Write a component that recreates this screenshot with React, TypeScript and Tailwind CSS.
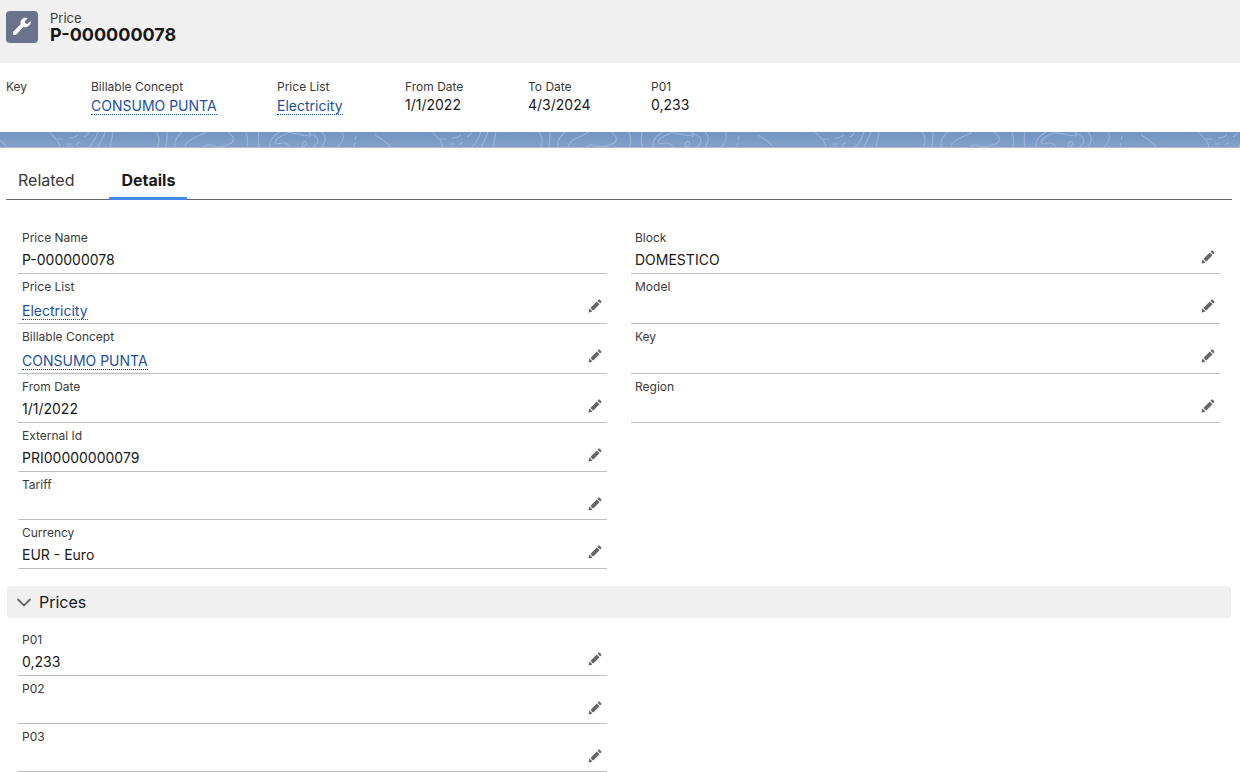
import { useState } from "react";

type Kind = "text" | "link" | "empty";
type Item = { label: string; value?: string; kind: Kind; editable?: boolean };

const rowHeights: Record<Kind, string> = {
  text: "h-[49px]",
  link: "h-[50px]",
  empty: "h-12",
};

const details: [Item, Item | null][] = [
  [{ label: "Price Name", value: "P-000000078", kind: "text" }, { label: "Block", value: "DOMESTICO", kind: "text", editable: true }],
  [{ label: "Price List", value: "Electricity", kind: "link", editable: true }, { label: "Model", kind: "empty", editable: true }],
  [{ label: "Billable Concept", value: "CONSUMO PUNTA", kind: "link", editable: true }, { label: "Key", kind: "empty", editable: true }],
  [{ label: "From Date", value: "1/1/2022", kind: "text", editable: true }, { label: "Region", kind: "empty", editable: true }],
  [{ label: "External Id", value: "PRI00000000079", kind: "text", editable: true }, null],
  [{ label: "Tariff", kind: "empty", editable: true }, null],
  [{ label: "Currency", value: "EUR - Euro", kind: "text", editable: true }, null],
];

const prices: [Item, Item | null][] = [
  [{ label: "P01", value: "0,233", kind: "text", editable: true }, null],
  [{ label: "P02", kind: "empty", editable: true }, null],
  [{ label: "P03", kind: "empty", editable: true }, null],
];

const highlights: { label: string; value?: string; link?: boolean; width: string }[] = [
  { label: "Key", width: "w-[85px]" },
  { label: "Billable Concept", value: "CONSUMO PUNTA", link: true, width: "w-[186px]" },
  { label: "Price List", value: "Electricity", link: true, width: "w-32" },
  { label: "From Date", value: "1/1/2022", width: "w-[123px]" },
  { label: "To Date", value: "4/3/2024", width: "w-[123px]" },
  { label: "P01", value: "0,233", width: "w-[123px]" },
];

function RecordLink({ children }: { children: string }) {
  return (
    <a href="#record" className="border-b border-dotted border-[#0b4f9e] text-[#1b4f9f]">
      {children}
    </a>
  );
}

function PencilIcon() {
  return (
    <svg viewBox="0 0 52 52" className="block size-3.5" fill="#666666" aria-hidden="true">
      <path d="M9.5 33.4l8.9 8.9c.4.4 1 .4 1.4 0L42 20c.4-.4.4-1 0-1.4l-8.8-8.8c-.4-.4-1-.4-1.4 0L9.5 32.1c-.4.4-.4 1 0 1.3zM36.1 5.7c-.4.4-.4 1 0 1.4l8.8 8.8c.4.4 1 .4 1.4 0l2.5-2.5c1.6-1.5 1.6-3.9 0-5.5l-4.7-4.7c-1.6-1.6-4.1-1.6-5.7 0l-2.3 2.5zM2.1 48.2c-.2 1 .7 1.9 1.7 1.7l10.9-2.6c.4-.1.7-.3.9-.5l.2-.2c.2-.2.3-.9-.1-1.3l-9-9c-.4-.4-1.1-.3-1.3-.1l-.2.2c-.3.3-.4.6-.5.9L2.1 48.2z" />
    </svg>
  );
}

function Field({ item, height }: { item: Item; height: string }) {
  return (
    <div className={`flex justify-between border-b border-[#bdbdbd] pl-1 ${height}`}>
      <dl>
        <dt className="pt-[5px] text-xs leading-4 text-[#3a3a3a]">{item.label}</dt>
        <dd className={`text-sm leading-5 text-[#181818] ${item.kind === "link" ? "pt-1.5" : "pt-1"}`}>
          {item.kind === "link" && item.value ? <RecordLink>{item.value}</RecordLink> : item.value}
        </dd>
      </dl>
      {item.editable && (
        <button type="button" aria-label={`Edit ${item.label}`} className="mt-[25px] mr-[5px] self-start">
          <PencilIcon />
        </button>
      )}
    </div>
  );
}

function FieldRows({ rows }: { rows: [Item, Item | null][] }) {
  return (
    <div className="mr-5 ml-[18px]">
      {rows.map(([left, right]) => (
        <div key={left.label} className="grid grid-cols-2 gap-x-6">
          <Field item={left} height={rowHeights[left.kind]} />
          {right && <Field item={right} height={rowHeights[left.kind]} />}
        </div>
      ))}
    </div>
  );
}

function TopographicBand() {
  return (
    <div className="h-4 border-b border-[#b4b8bf] bg-linear-to-b from-[#7195c2] to-[#83a0cb]">
      <svg className="block h-[15px] w-full" aria-hidden="true">
        <defs>
          <pattern id="contours" width="383" height="15" patternUnits="userSpaceOnUse">
            <g fill="none" stroke="#9bb5d9" strokeWidth="1.1">
              <path d="M-8 3C-3 6 4 10 7 15M375 3C380 6 387 10 390 15" />
              <path d="M49 0C53 5 58 6 60 15M57 7h6M69 6l6-1 3-2M66 12h6M76 13l4-3M84 5l5-4M98 0C96 6 93 11 89 15M105 0C103 6 100 11 98 15M113 0C112 6 111 11 110 15" />
              <path d="M156 0C160 5 160 11 157 15M167 0C167 5 167 10 166 15M182 0C176 5 174 10 175 15M206 0C199 5 186 7 185 15M228 0C235 5 236 11 226 13C221 15 216 15 213 14M204 15C207 12 211 13 213 14M246 0C248 5 248 10 247 15M259 0C258 5 258 10 259 15" />
              <path d="M280 0C271 5 269 10 270 15M290 0C284 3 276 5 275 10C276 14 281 10 285 11C288 12 289 13 290 15M290 0C293 3 299 1 302 3M303 15C301 12 304 8 306 10C308 12 305 14 303 15M302 3C306 5 311 1 314 3C320 7 318 12 314 15M309 0C311 2 311 3 309 5M322 0C327 5 326 10 322 15M342 0C345 5 342 11 338 15M356 4l-1 4M355 11l-1 3" />
            </g>
          </pattern>
        </defs>
        <rect width="100%" height="15" fill="url(#contours)" />
      </svg>
    </div>
  );
}

export default function App() {
  const [open, setOpen] = useState(true);
  return (
    <div className="bg-white font-['Inter','Liberation_Sans',sans-serif] text-[#181818]">
      <header>
        <div className="flex h-[63px] gap-3 bg-[#f0f0f0] pt-[11px] pl-1.5">
          <span className="flex size-8 items-center justify-center rounded bg-[#6b738c]">
            <svg viewBox="0 0 24 24" className="size-6" fill="#ffffff" aria-hidden="true">
              <path d="M20.9 6.6c-.1-.3-.5-.4-.8-.1l-2.300 2.300c-.5.5-1.200.5-1.700 0l-1.100-1.100c-.5-.5-.5-1.200 0-1.700l2.300-2.300c.3-.3.2-.7-.2-.8-1.900-.5-4 0-5.400 1.600-1.200 1.400-1.500 3.200-1 4.800l-7.300 7.300c-.8.8-.8 2 0 2.800s2 .8 2.800 0l7.300-7.300c1.700.6 3.600.2 5-1.100 1.300-1.200 2.800-2.700 2.400-4.400z" />
            </svg>
          </span>
          <h1>
            <span className="block text-[13px] leading-[14px] text-[#3a3a3a]">Price</span>
            <span className="block text-lg leading-5 font-bold">P-000000078</span>
          </h1>
        </div>
        <dl className="flex h-[69px] pt-4 pl-1.5">
          {highlights.map((h) => (
            <div key={h.label} className={h.width}>
              <dt className="text-xs leading-4 text-[#3a3a3a]">{h.label}</dt>
              <dd className={`text-sm leading-5 ${h.link ? "pt-px" : ""}`}>
                {h.link && h.value ? <RecordLink>{h.value}</RecordLink> : h.value}
              </dd>
            </div>
          ))}
        </dl>
      </header>
      <TopographicBand />
      <main>
        <div role="tablist" className="mr-2 ml-1.5 mt-3 flex h-10 border-b border-[#666666] text-base">
          <button type="button" role="tab" aria-selected="false" className="px-3 pt-px text-[#3a3a3a]">
            Related
          </button>
          <button type="button" role="tab" aria-selected="true" className="-mb-px ml-[23px] border-b-3 border-[#4688f1] px-3 pt-[3px] font-bold">
            Details
          </button>
        </div>
        <section aria-label="Details" className="pt-[25px]">
          <FieldRows rows={details} />
        </section>
        <section className="pt-[17px]">
          <h2 className="mr-[9px] ml-[7px]">
            <button
              type="button"
              aria-expanded={open}
              onClick={() => setOpen(!open)}
              className="flex h-8 w-full items-center gap-2 rounded bg-[#f0f0f0] pl-2.5 text-base"
            >
              <svg viewBox="0 0 14 14" className="size-3.5" fill="none" stroke="#666666" strokeWidth="1.8" strokeLinecap="round" aria-hidden="true">
                <path d="M1 4.5L7 10.5L13 4.5" />
              </svg>
              Prices
            </button>
          </h2>
          {open && (
            <div className="pt-[9px]">
              <FieldRows rows={prices} />
            </div>
          )}
        </section>
      </main>
    </div>
  );
}
